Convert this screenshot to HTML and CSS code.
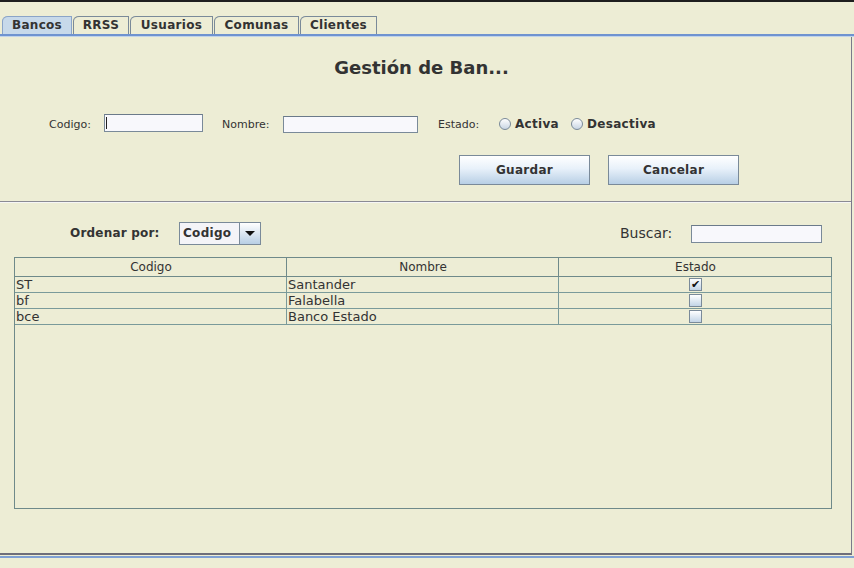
FILE: index.html
```html
<!DOCTYPE html>
<html lang="es">
<head>
<meta charset="utf-8">
<title>Gestión de Bancos</title>
<link rel="stylesheet" href="styles.css">
</head>
<body>
<div class="app">
  <div class="topline"></div>
  <div class="tabs">
    <div class="tab selected t-bancos">Bancos</div>
    <div class="tab t-rrss">RRSS</div>
    <div class="tab t-usuarios">Usuarios</div>
    <div class="tab t-comunas">Comunas</div>
    <div class="tab t-clientes">Clientes</div>
  </div>
  <div class="tabrule"></div>
  <div class="panel">
    <h1 class="title">Gestión de Ban...</h1>
    <div class="form-row">
      <span class="lbl lbl-codigo">Codigo:</span>
      <span class="field field-codigo"><span class="caret"></span></span>
      <span class="lbl lbl-nombre">Nombre:</span>
      <span class="field field-nombre"></span>
      <span class="lbl lbl-estado">Estado:</span>
      <span class="radio radio-1"></span>
      <span class="radio-text">Activa</span>
      <span class="radio radio-2"></span>
      <span class="radio-text">Desactiva</span>
    </div>
    <div class="btn-row">
      <button class="btn">Guardar</button>
      <button class="btn">Cancelar</button>
    </div>
    <div class="sep"></div>
    <div class="sort-row">
      <span class="sort-lbl">Ordenar por:</span>
      <div class="combo">
        <span class="combo-text">Codigo</span>
        <span class="combo-arrow"><span class="tri"></span></span>
      </div>
      <span class="search-lbl">Buscar:</span>
      <span class="field field-search"></span>
    </div>
    <div class="table">
      <div class="trow thead">
        <div class="cell c1">Codigo</div>
        <div class="cell c2">Nombre</div>
        <div class="cell c3">Estado</div>
      </div>
      <div class="trow">
        <div class="cell c1">ST</div>
        <div class="cell c2">Santander</div>
        <div class="cell c3"><span class="chk checked">✔</span></div>
      </div>
      <div class="trow">
        <div class="cell c1">bf</div>
        <div class="cell c2">Falabella</div>
        <div class="cell c3"><span class="chk"></span></div>
      </div>
      <div class="trow">
        <div class="cell c1">bce</div>
        <div class="cell c2">Banco Estado</div>
        <div class="cell c3"><span class="chk"></span></div>
      </div>
    </div>
  </div>
  <div class="bottomrule"></div>
</div>
</body>
</html>
```

FILE: styles.css
```css
* { box-sizing: border-box; }
html, body { margin: 0; padding: 0; }
body {
  background: #ededd5;
  font-family: "DejaVu Sans", sans-serif;
  color: #333333;
}
.app {
  width: 854px;
  height: 568px;
  display: flex;
  flex-direction: column;
  overflow: hidden;
}
.topline { height: 2px; background: #1e1e1e; }
.tabs {
  display: flex;
  margin-top: 14px;
  padding-left: 2px;
  height: 18px;
  gap: 1px;
}
.tab {
  height: 18px;
  border: 1px solid #7a8a99;
  border-bottom: none;
  border-top-left-radius: 6px 5px;
  font-weight: bold;
  font-size: 12px;
  line-height: 17px;
  text-align: center;
  letter-spacing: 0.3px;
  color: #333;
}
.t-bancos { width: 70px; }
.t-rrss { width: 56px; }
.t-usuarios { width: 83px; }
.t-comunas { width: 85px; }
.t-clientes { width: 77px; }
.tab.selected {
  background: #c7d9ea;
  border-color: #8aa4c8;
}
.tabrule {
  height: 2px;
  background: #6f93d0;
  border-bottom: 1px solid #c0d3ea;
  box-sizing: content-box;
}
.panel {
  height: 518px;
  width: 852px;
  border-right: 1px solid #7a7a8a;
  border-bottom: 2px solid #6e6e7a;
  display: flex;
  flex-direction: column;
}
.title {
  margin: 19px 0 0 0;
  height: 24px;
  line-height: 24px;
  font-size: 18px;
  font-weight: bold;
  text-align: center;
  padding-right: 8px;
  color: #333;
}
.form-row {
  display: flex;
  align-items: center;
  margin-top: 34px;
  height: 20px;
}
.lbl { font-size: 11px; color: #333; }
.lbl-codigo { margin-left: 49px; width: 55px; }
.lbl-nombre { margin-left: 19px; width: 61px; }
.lbl-estado { margin-left: 20px; width: 61px; }
.field {
  display: inline-block;
  height: 18px;
  background: #f8f8fc;
  border: 1px solid #7a8a99;
  border-top-color: #6b7a8a;
}
.field-codigo { width: 99px; margin-top: -3px; position: relative; }
.caret {
  position: absolute;
  left: 1px; top: 2px;
  width: 1px; height: 12px;
  background: #222;
}
.field-nombre { width: 135px; height: 17px; }
.radio {
  width: 12px; height: 12px;
  border-radius: 50%;
  border: 1px solid #7a8a99;
  background: linear-gradient(#ffffff, #c9d6e4);
}
.radio-1 { margin-left: 0; }
.radio-2 { margin-left: 12px; }
.radio-text {
  font-size: 12px;
  font-weight: bold;
  margin-left: 4px;
  letter-spacing: 0.3px;
  color: #333;
}
.btn-row {
  display: flex;
  margin-top: 21px;
  padding-left: 459px;
  gap: 18px;
}
.btn {
  width: 131px;
  height: 30px;
  border: 1px solid #7a8a99;
  background: linear-gradient(#ffffff 0%, #e8f1fa 45%, #b8cfe5 100%);
  font-family: "DejaVu Sans", sans-serif;
  font-weight: bold;
  font-size: 12px;
  letter-spacing: 0.3px;
  color: #333;
  padding: 0;
}
.sep {
  margin-top: 16px;
  height: 1px;
  background: #8a8a94;
  border-bottom: 1px solid #f6f6f6;
  box-sizing: content-box;
}
.sort-row {
  display: flex;
  align-items: center;
  margin-top: 18px;
  height: 24px;
}
.sort-lbl {
  font-size: 12px;
  font-weight: bold;
  margin-left: 70px;
  width: 109px;
  letter-spacing: 0.2px;
}
.combo {
  display: flex;
  width: 82px;
  height: 23px;
  border: 1px solid #7a8a99;
  background: #f4f4f8;
}
.combo-text {
  flex: 1;
  font-size: 12px;
  font-weight: bold;
  line-height: 21px;
  padding-left: 3px;
  letter-spacing: 0.3px;
}
.combo-arrow {
  width: 21px;
  border-left: 1px solid #7a8a99;
  background: linear-gradient(#ffffff, #b8cfe5);
  display: flex;
  align-items: center;
  justify-content: center;
}
.tri {
  width: 0; height: 0;
  border-left: 5px solid transparent;
  border-right: 5px solid transparent;
  border-top: 5px solid #111;
}
.search-lbl {
  font-size: 14px;
  margin-left: 359px;
  width: 71px;
}
.field-search { width: 131px; height: 18px; margin-top: 2px; }
.table {
  margin: 12px 0 0 14px;
  width: 818px;
  height: 252px;
  border: 1px solid #6f8a8a;
}
.trow {
  display: flex;
  height: 16px;
  border-bottom: 1px solid #7a9a9a;
  width: 817px;
}
.thead { height: 19px; border-bottom: 1px solid #6f8a8a; }
.cell {
  font-size: 13px;
  line-height: 15px;
  padding-left: 1px;
  border-right: 1px solid #7a9a9a;
  white-space: nowrap;
  overflow: hidden;
}
.thead .cell {
  font-size: 12px;
  line-height: 19px;
  text-align: center;
  border-right-color: #6f8a8a;
}
.c1 { width: 272px; }
.c2 { width: 272px; }
.c3 { width: 273px; text-align: center; display: flex; justify-content: center; align-items: center; }
.thead .c3 { display: block; }
.chk {
  width: 13px; height: 13px;
  border: 1px solid #7a8a99;
  background: linear-gradient(#ffffff, #c2d4e6);
  font-size: 11px;
  line-height: 11px;
  text-align: center;
  color: #111;
  display: inline-block;
}
.bottomrule {
  margin-top: 1px;
  height: 2px;
  background: #7fa0d4;
}
```
